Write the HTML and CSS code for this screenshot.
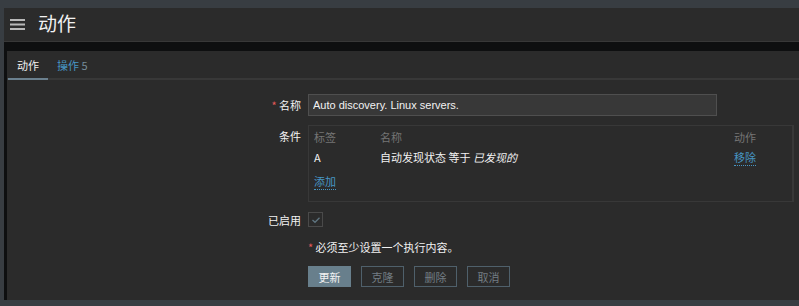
FILE: index.html
```html
<!DOCTYPE html>
<html lang="zh-CN">
<head>
<meta charset="utf-8">
<link rel="stylesheet" href="styles.css">
</head>
<body>
<div class="page">
  <header class="header">
    <svg class="menu" width="15" height="11" viewBox="0 0 15 11"><rect x="0" y="0" width="15" height="2" fill="#b8b8b8"/><rect x="0" y="4.5" width="15" height="2" fill="#b8b8b8"/><rect x="0" y="9" width="15" height="2" fill="#b8b8b8"/></svg>
    <h1 class="title">动作</h1>
  </header>
  <div class="wrap">
    <div class="panel">
      <nav class="tabs">
        <span class="tab active">动作</span>
        <span class="tab"><span class="link">操作</span> <span class="count">5</span></span>
      </nav>
      <div class="form">
        <div class="row">
          <label class="lbl"><span class="req">*</span> 名称</label>
          <div class="field"><input class="input" value="Auto discovery. Linux servers."></div>
        </div>
        <div class="row">
          <label class="lbl">条件</label>
          <div class="field">
            <div class="cond">
              <div class="crow head"><span class="c1">标签</span><span class="c2">名称</span><span class="c3">动作</span></div>
              <div class="crow"><span class="c1">A</span><span class="c2">自动发现状态 等于 <i>已发现的</i></span><span class="c3"><a class="dl">移除</a></span></div>
              <div class="crow add"><span class="c1"><a class="dl">添加</a></span></div>
            </div>
          </div>
        </div>
        <div class="row check-row">
          <label class="lbl">已启用</label>
          <div class="field">
            <span class="check"><svg width="10" height="8" viewBox="0 0 10 8"><path d="M1.5 4 L4 6.3 L8.5 1.8" fill="none" stroke="#5f7580" stroke-width="1.3"/></svg></span>
          </div>
        </div>
        <div class="row note-row">
          <div class="lbl"></div>
          <div class="field note"><span class="req">*</span> 必须至少设置一个执行内容。</div>
        </div>
        <div class="row">
          <div class="lbl"></div>
          <div class="field buttons">
            <button class="btn primary">更新</button>
            <button class="btn">克隆</button>
            <button class="btn">删除</button>
            <button class="btn">取消</button>
          </div>
        </div>
      </div>
    </div>
  </div>
</div>
</body>
</html>
```

FILE: styles.css
```css
* { box-sizing: border-box; }
html, body { margin: 0; padding: 0; }
body {
  background: #383d42;
  font-family: "Noto Sans CJK SC", "Liberation Sans", sans-serif;
  font-size: 11px;
  color: #f2f2f2;
  width: 799px;
  height: 306px;
  overflow: hidden;
}
.page {
  margin: 8px 0 0 4px;
  height: 292px;
  display: flex;
  flex-direction: column;
}
.header {
  height: 34px;
  background: #2b2b2b;
  display: flex;
  align-items: center;
  padding-left: 6px;
  border-bottom: 1px solid #383838;
}
.menu { margin-right: 13px; }
.title {
  margin: 0;
  font-size: 19px;
  font-weight: normal;
  color: #f2f2f2;
  line-height: 1;
  position: relative;
  top: -2px;
}
.wrap {
  flex: 1;
  background: #0e0f10;
  padding: 9px 0 0 3px;
  display: flex;
}
.panel {
  flex: 1;
  background: #2b2b2b;
}
.tabs {
  display: flex;
  height: 29px;
  border-bottom: 2px solid #383838;
  padding-left: 1px;
}
.tab {
  padding: 5px 9px 0;
  line-height: 18px;
  border-bottom: 2px solid transparent;
  margin-bottom: -2px;
  color: #f2f2f2;
}
.tab.active { border-bottom-color: #6b808e; }
.link { color: #4796c4; }
.count { color: #768d99; }
.form { padding-top: 14px; }
.row { display: flex; margin-bottom: 9px; }
.lbl {
  width: 301px;
  text-align: right;
  padding-right: 7px;
  line-height: 22px;
  color: #f2f2f2;
}
.req { color: #e45959; }
.field { flex: 1; }
.input {
  width: 409px;
  height: 22px;
  background: #383838;
  border: 1px solid #4f4f4f;
  color: #f2f2f2;
  font-family: "Liberation Sans", "Noto Sans CJK SC", sans-serif;
  font-size: 11px;
  padding: 0 4px;
  outline: none;
  display: block;
}
.cond {
  width: 486px;
  border: 1px solid #383838;
  border-right-width: 2px;
  padding: 1px 5px 10px;
}
.crow { display: flex; line-height: 20px; }
.crow.head { color: #757575; }
.crow.add { margin-top: 4px; }
.c1 { width: 66px; }
.c2 { width: 354px; }
i { font-style: italic; }
.dl {
  color: #4796c4;
  border-bottom: 1px dotted #4796c4;
  line-height: 15px;
  display: inline-block;
}
.check-row { margin-bottom: 8px; }
.check-row .lbl { line-height: 18px; }
.check {
  display: inline-block;
  width: 15px;
  height: 15px;
  border: 1px solid #4a4a4a;
  background: #2b2b2b;
  margin-top: 1px;
  text-align: center;
  line-height: 12px;
}
.note-row { margin-bottom: 9px; }
.note { line-height: 20px; }
.buttons { display: flex; gap: 10px; }
.btn {
  height: 21px;
  width: 43px;
  font-family: "Noto Sans CJK SC", sans-serif;
  font-size: 11px;
  background: transparent;
  border: 1px solid #4f606b;
  color: #737d83;
  padding: 0;
}
.btn.primary {
  background: #687f8c;
  border-color: #687f8c;
  color: #f2f2f2;
}
```
